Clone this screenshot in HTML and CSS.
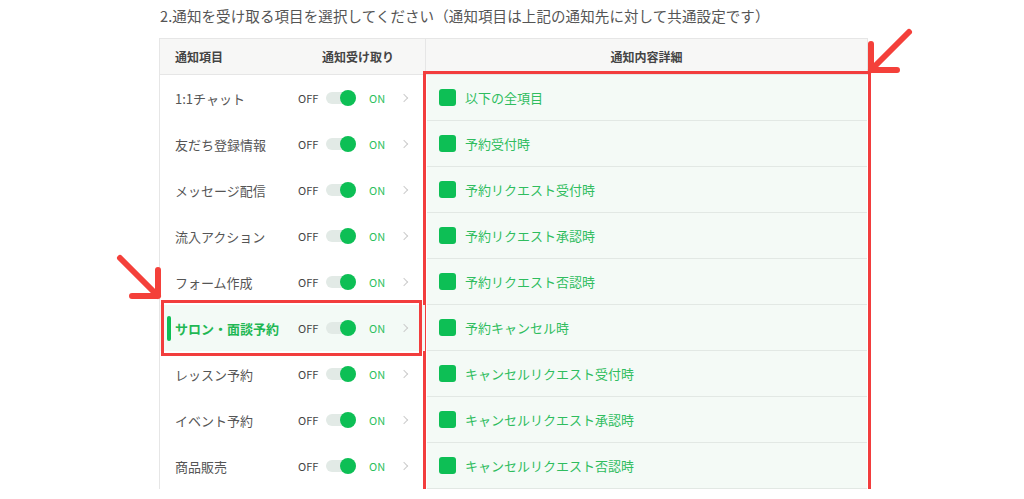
FILE: index.html
```html
<!DOCTYPE html>
<html lang="ja">
<head>
    <meta charset="UTF-8">
    <meta name="viewport" content="width=device-width, initial-scale=1.0">
    <title>通知設定</title>
    <link rel="stylesheet" href="styles.css">
</head>
<body>
    <p class="lead">2.通知を受け取る項目を選択してください（通知項目は上記の通知先に対して共通設定です）</p>

    <div class="table">
        <div class="col-left">
            <div class="head">
                <span class="head-item">通知項目</span>
                <span class="head-recv">通知受け取り</span>
            </div>
            <div class="row"><span class="label">1:1チャット</span><span class="off">OFF</span><span class="toggle"></span><span class="on">ON</span><span class="chev"></span></div>
            <div class="row"><span class="label">友だち登録情報</span><span class="off">OFF</span><span class="toggle"></span><span class="on">ON</span><span class="chev"></span></div>
            <div class="row"><span class="label">メッセージ配信</span><span class="off">OFF</span><span class="toggle"></span><span class="on">ON</span><span class="chev"></span></div>
            <div class="row"><span class="label">流入アクション</span><span class="off">OFF</span><span class="toggle"></span><span class="on">ON</span><span class="chev"></span></div>
            <div class="row"><span class="label">フォーム作成</span><span class="off">OFF</span><span class="toggle"></span><span class="on">ON</span><span class="chev"></span></div>
            <div class="row active"><span class="label">サロン・面談予約</span><span class="off">OFF</span><span class="toggle"></span><span class="on">ON</span><span class="chev"></span></div>
            <div class="row"><span class="label">レッスン予約</span><span class="off">OFF</span><span class="toggle"></span><span class="on">ON</span><span class="chev"></span></div>
            <div class="row"><span class="label">イベント予約</span><span class="off">OFF</span><span class="toggle"></span><span class="on">ON</span><span class="chev"></span></div>
            <div class="row"><span class="label">商品販売</span><span class="off">OFF</span><span class="toggle"></span><span class="on">ON</span><span class="chev"></span></div>
        </div>

        <div class="col-right">
            <div class="head head-center">通知内容詳細</div>
            <div class="detail-list">
                <div class="detail"><span class="check"></span>以下の全項目</div>
                <div class="detail"><span class="check"></span>予約受付時</div>
                <div class="detail"><span class="check"></span>予約リクエスト受付時</div>
                <div class="detail"><span class="check"></span>予約リクエスト承認時</div>
                <div class="detail"><span class="check"></span>予約リクエスト否認時</div>
                <div class="detail"><span class="check"></span>予約キャンセル時</div>
                <div class="detail"><span class="check"></span>キャンセルリクエスト受付時</div>
                <div class="detail"><span class="check"></span>キャンセルリクエスト承認時</div>
                <div class="detail"><span class="check"></span>キャンセルリクエスト否認時</div>
            </div>
        </div>
    </div>

    <!-- annotation arrows -->
    <svg class="arrow arrow-top" width="60" height="60" viewBox="0 0 60 60">
        <path d="M48 6 L10 44 M10 44 L10 18 M10 44 L36 44" stroke="#f4403a" stroke-width="6" stroke-linecap="round" stroke-linejoin="round" fill="none"/>
    </svg>
    <svg class="arrow arrow-left" width="60" height="60" viewBox="0 0 60 60">
        <path d="M8 6 L46 44 M46 44 L46 18 M46 44 L20 44" stroke="#f4403a" stroke-width="6" stroke-linecap="round" stroke-linejoin="round" fill="none"/>
    </svg>
</body>
</html>
```

FILE: styles.css
```css
body {
    margin: 0;
    font-family: "Noto Sans CJK JP", "Noto Sans", sans-serif;
    color: #555;
    background: #fff;
    overflow: hidden;
}
.lead {
    margin: 0;
    padding: 6px 0 0 160px;
    height: 32px;
    font-size: 14.5px;
    line-height: 20px;
    color: #555;
    letter-spacing: 0.1px;
}
.table {
    display: flex;
    margin-left: 159px;
    width: 708px;
    border-left: 1px solid #e6e6e6;
}
.col-left {
    width: 265px;
    border-right: 1px solid #e6e6e6;
}
.col-right {
    flex: 1;
}
.head {
    display: flex;
    align-items: center;
    height: 35px;
    background: #f7f7f6;
    border-top: 1px solid #e6e6e6;
    border-bottom: 1px solid #e6e6e6;
    font-size: 12px;
    font-weight: bold;
    color: #444;
}
.head-item {
    padding-left: 15px;
    width: 147px;
}
.head-center {
    justify-content: center;
    border-right: 1px solid #e6e6e6;
}
.row {
    display: flex;
    align-items: center;
    height: 46px;
    padding-left: 15px;
    box-sizing: border-box;
}
.label {
    width: 123px;
    font-size: 13px;
    color: #555;
}
.off {
    font-size: 11px;
    color: #444;
    width: 28px;
}
.toggle {
    position: relative;
    width: 30px;
    height: 12px;
    border-radius: 6px;
    background: #e2eae6;
    margin-right: 13px;
}
.toggle::after {
    content: "";
    position: absolute;
    right: 0;
    top: -2px;
    width: 16px;
    height: 16px;
    border-radius: 50%;
    background: #0dbf55;
}
.on {
    font-size: 11px;
    color: #2dbf5e;
    width: 32px;
}
.chev {
    width: 5px;
    height: 5px;
    border-top: 1px solid #ccc;
    border-right: 1px solid #ccc;
    transform: rotate(45deg);
}
.row.active {
    background: #f3faf6;
    position: relative;
}
.row.active::before {
    content: "";
    position: absolute;
    left: 7px;
    top: 11px;
    width: 4px;
    height: 25px;
    border-radius: 2px;
    background: #0dbf55;
}
.row.active::after {
    content: "";
    position: absolute;
    left: 1px;
    right: 3px;
    top: -5px;
    bottom: -5px;
    border: 3px solid #f23d3d;
}
.row.active .label {
    font-weight: bold;
    color: #1fb854;
}
.detail-list {
    outline: 3px solid #f23d3d;
    outline-offset: 1px;
    margin: 0 1px 0 1px;
}
.detail {
    display: flex;
    align-items: center;
    height: 46px;
    box-sizing: border-box;
    padding-left: 12px;
    background: #f4faf6;
    border-bottom: 1px solid #e2e8e4;
    font-size: 13px;
    color: #2fbd5e;
}
.check {
    width: 17px;
    height: 17px;
    border-radius: 3px;
    background: #0dbf55;
    margin-right: 9px;
}
.arrow {
    position: absolute;
}
.arrow-top {
    left: 861px;
    top: 26px;
}
.arrow-left {
    left: 112px;
    top: 252px;
}
```
